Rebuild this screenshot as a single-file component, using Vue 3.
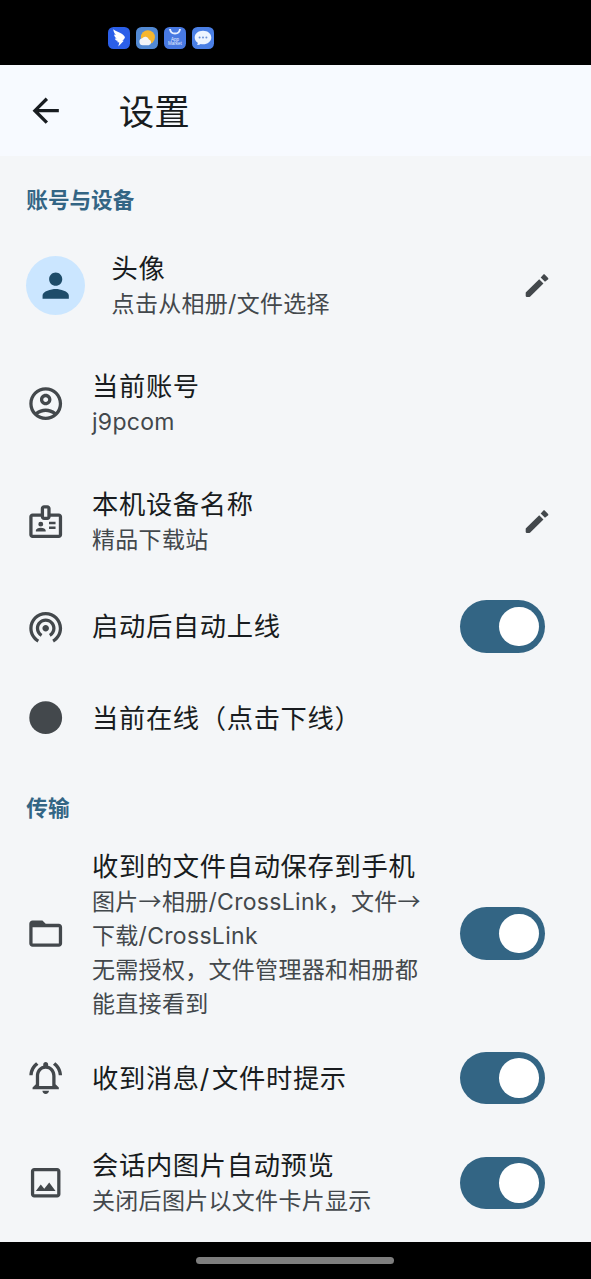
<script setup>
const icons = {
  account: 'M12 2C6.48 2 2 6.48 2 12s4.48 10 10 10 10-4.48 10-10S17.52 2 12 2zM7.35 18.5C8.66 17.56 10.26 17 12 17s3.34.56 4.65 1.5C15.34 19.44 13.74 20 12 20s-3.34-.56-4.65-1.5zm10.79-1.38C16.45 15.8 14.32 15 12 15s-4.45.8-6.14 2.12C4.7 15.73 4 13.95 4 12c0-4.42 3.58-8 8-8s8 3.58 8 8c0 1.95-.7 3.73-1.86 5.12zM12 6c-1.93 0-3.5 1.57-3.5 3.5S10.07 13 12 13s3.5-1.57 3.5-3.5S13.93 6 12 6zm0 5c-.83 0-1.5-.67-1.5-1.5S11.17 8 12 8s1.5.67 1.5 1.5S12.83 11 12 11z',
  badge: 'M20 7h-5V4c0-1.1-.9-2-2-2h-2c-1.1 0-2 .9-2 2v3H4c-1.1 0-2 .9-2 2v11c0 1.1.9 2 2 2h16c1.1 0 2-.9 2-2V9c0-1.1-.9-2-2-2zM11 4h2v5h-2V4zm9 16H4V9h5c0 1.1.9 2 2 2h2c1.1 0 2-.9 2-2h5v11zM9 12a1.5 1.5 0 1 0 0 3 1.5 1.5 0 0 0 0-3zm2.08 4.18C10.44 15.9 9.74 15.75 9 15.75s-1.44.15-2.08.43C6.36 16.42 6 16.96 6 17.57V18h6v-.43c0-.61-.36-1.15-.92-1.39zM14 12h4v1.5h-4zM14 15h4v1.5h-4z',
  tether: 'M12 11c-1.1 0-2 .9-2 2s.9 2 2 2 2-.9 2-2-.9-2-2-2zm6 2c0-3.31-2.69-6-6-6s-6 2.69-6 6c0 2.22 1.21 4.15 3 5.19l1-1.74c-1.19-.7-2-1.97-2-3.45 0-2.21 1.79-4 4-4s4 1.79 4 4c0 1.48-.81 2.75-2 3.45l1 1.74c1.79-1.04 3-2.97 3-5.19zM12 3C6.48 3 2 7.48 2 13c0 3.7 2.01 6.92 4.99 8.65l1-1.73C5.61 18.53 4 15.96 4 13c0-4.42 3.58-8 8-8s8 3.58 8 8c0 2.96-1.61 5.53-4 6.92l1 1.73c2.99-1.73 5-4.95 5-8.65 0-5.52-4.48-10-10-10z',
  dot: 'M12 2a10 10 0 1 0 0 20 10 10 0 0 0 0-20z',
  folder: 'M20 6h-8l-2-2H4c-1.1 0-1.99.9-1.99 2L2 18c0 1.1.9 2 2 2h16c1.1 0 2-.9 2-2V8c0-1.1-.9-2-2-2zm0 12H4V8h16v10z',
  bell: 'M12 22c1.1 0 2-.9 2-2h-4c0 1.1.9 2 2 2zm6-6v-5c0-3.07-1.63-5.64-4.5-6.32V4c0-.83-.67-1.5-1.5-1.5s-1.5.67-1.5 1.5v.68C7.64 5.36 6 7.92 6 11v5l-2 2v1h16v-1l-2-2zm-2 1H8v-6c0-2.48 1.51-4.5 4-4.5s4 2.02 4 4.5v6zM7.58 4.08L6.15 2.65C3.75 4.48 2.17 7.3 2.03 10.5h2c.15-2.65 1.51-4.97 3.55-6.42zm12.39 6.42h2c-.15-3.2-1.73-6.02-4.12-7.85l-1.42 1.43c2.02 1.45 3.39 3.77 3.54 6.42z',
  image: 'M19 5v14H5V5h14m0-2H5c-1.1 0-2 .9-2 2v14c0 1.1.9 2 2 2h14c1.1 0 2-.9 2-2V5c0-1.1-.9-2-2-2zm-4.86 8.86l-3 3.87L9 13.14 6 17h12l-3.86-5.14z',
  edit: 'M3 17.9v2.4c0 .4.3.7.7.7h2.400c.2 0 .4-.1.6-.3L17.400 10.050 13.950 6.600 3.200 17.300c-.1.200-.2.400-.2.600zM21 6.900c.5-.5.500-1 0-1.500l-2.400-2.400c-.4-.4-1-.4-1.400 0l-2.050 2.200 3.500 3.500z',
}

const sections = [
  {
    title: '账号与设备',
    rows: [
      { avatar: true, title: '头像', lines: ['点击从相册/文件选择'], action: 'edit' },
      { icon: 'account', title: '当前账号', lines: ['j9pcom'] },
      { icon: 'badge', title: '本机设备名称', lines: ['精品下载站'], action: 'edit' },
      { icon: 'tether', title: '启动后自动上线', action: 'switch' },
      { icon: 'dot', title: '当前在线（点击下线）' },
    ],
  },
  {
    title: '传输',
    rows: [
      {
        icon: 'folder',
        title: '收到的文件自动保存到手机',
        lines: ['图片→相册/CrossLink，文件→', '下载/CrossLink', '无需授权，文件管理器和相册都', '能直接看到'],
        action: 'switch',
        tall: true,
      },
      { icon: 'bell', title: '收到消息/文件时提示', action: 'switch' },
      { icon: 'image', title: '会话内图片自动预览', lines: ['关闭后图片以文件卡片显示'], action: 'switch' },
    ],
  },
]

// Splits a line into latin and non-latin runs so each gets its own font.
const runs = (s) => s.split(/([A-Za-z0-9/]+)/).filter(Boolean)
const isLatin = (s) => /^[A-Za-z0-9/]/.test(s)
</script>

<template>
  <div class="screen">
    <div class="status">
      <svg class="app" viewBox="0 0 22 22">
        <rect width="22" height="22" rx="5.5" fill="#2b5fe8" />
        <path d="M5.300 2.200c2.800 2.200 6 2.800 8.800 4.800 1.800 1.300 2.900 2.600 2.800 3.500-.2 1.200-1.500 2.200-2.600 3.300h1.500l-5.500 5.800 1-4.200-2.500-.5 1.500-.9c-2-.4-3-1.300-3.500-2.600l1.900.2C7.200 10.500 6.200 9 6 7.500l1.900.6C6.300 6.300 5.400 4.200 5.300 2.200z" fill="#fff" />
      </svg>
      <svg class="app" viewBox="0 0 22 22">
        <rect width="22" height="22" rx="5.500" fill="#5289d3" />
        <circle cx="11.900" cy="10.200" r="7" fill="#f5b62f" />
        <path d="M6.700 18.300a3.600 3.600 0 0 1-.5-7.100 3.800 3.800 0 0 1 6.700 1.300A3 3 0 0 1 12.700 18.300z" fill="#f3f5f8" />
      </svg>
      <svg class="app" viewBox="0 0 22 22">
        <rect width="22" height="22" rx="5.500" fill="#4879e2" />
        <path d="M6 2c.5 6 9.500 6 10 0" fill="none" stroke="#e6efff" stroke-width="1.900" />
        <text x="11" y="13.700" class="market">App</text>
        <text x="11" y="18" class="market">Market</text>
      </svg>
      <svg class="app" viewBox="0 0 22 22">
        <rect width="22" height="22" rx="5.500" fill="#4a7fe5" />
        <path d="M11 3.700c4.800 0 8.300 2.900 8.300 6.800s-3.500 6.800-8.300 6.800c-.8 0-1.600-.1-2.300-.3-.9.700-2.200 1.100-3.600 1 .5-.6.700-1.400.6-2.300C3.800 14.400 2.700 12.600 2.700 10.500c0-3.900 3.500-6.800 8.300-6.800z" fill="#edf4ff" />
        <circle cx="7.600" cy="10.500" r="1" fill="#6d93d8" />
        <circle cx="11" cy="10.500" r="1" fill="#6d93d8" />
        <circle cx="14.400" cy="10.500" r="1" fill="#6d93d8" />
      </svg>
    </div>

    <header class="bar">
      <svg class="icon back" viewBox="0 0 24 24">
        <path d="M20 11H7.830l5.590-5.590L12 4l-8 8 8 8 1.410-1.410L7.830 13H20v-2z" />
      </svg>
      <h1>设置</h1>
    </header>

    <main>
      <section v-for="s in sections" :key="s.title">
        <h2>{{ s.title }}</h2>
        <div v-for="r in s.rows" :key="r.title" class="row" :class="{ two: r.lines, tall: r.tall }">
          <span v-if="r.avatar" class="avatar">
            <svg class="icon" viewBox="0 0 24 24">
              <path d="M12 12c2.210 0 4-1.790 4-4s-1.790-4-4-4-4 1.790-4 4 1.790 4 4 4zm0 2c-2.670 0-8 1.340-8 4v2h16v-2c0-2.660-5.330-4-8-4z" />
            </svg>
          </span>
          <svg v-else class="icon" viewBox="0 0 24 24"><path :d="icons[r.icon]" /></svg>
          <div class="text">
            <div class="title">
              <span v-for="(p, i) in runs(r.title)" :key="i" :class="{ latin: isLatin(p) }">{{ p }}</span>
            </div>
            <div v-for="l in r.lines" :key="l" class="sub">
              <span v-for="(p, i) in runs(l)" :key="i" :class="{ latin: isLatin(p) }">{{ p }}</span>
            </div>
          </div>
          <svg v-if="r.action === 'edit'" class="edit" viewBox="0 0 24 24"><path :d="icons.edit" /></svg>
          <span v-else-if="r.action === 'switch'" class="switch"><i></i></span>
        </div>
      </section>
    </main>

    <footer><i></i></footer>
  </div>
</template>

<style>
body {
  background: #000;
}
</style>

<style scoped>
.screen {
  width: 591px;
  height: 1279px;
  display: flex;
  flex-direction: column;
  overflow: hidden;
  background: #f4f6f8;
  color: #181c20;
  font-family: "Noto Sans CJK SC", sans-serif;
}
.status {
  box-sizing: border-box;
  height: 65px;
  flex: none;
  display: flex;
  gap: 6px;
  padding: 27px 0 0 108px;
  background: #000;
}
.app {
  width: 22px;
  height: 22px;
}
.market {
  font: 4.500px "Liberation Sans", sans-serif;
  text-anchor: middle;
  fill: #e6efff;
}
.bar {
  height: 91px;
  flex: none;
  display: flex;
  align-items: center;
  padding-left: 26.300px;
  background: #f7faff;
}
.icon {
  width: 39.400px;
  height: 39.400px;
  flex: none;
  fill: #43484c;
}
.back {
  fill: #181c20;
}
h1 {
  margin: 0 0 2px 53px;
  font-size: 35.500px;
  line-height: 48px;
  font-weight: 400;
}
main {
  flex: 1;
  min-height: 0;
}
h2 {
  box-sizing: border-box;
  margin: 0;
  padding: 28px 0 0 26.300px;
  height: 70.700px;
  line-height: 30px;
  font-size: 21.600px;
  font-weight: 700;
  color: #336584;
}
.row {
  display: flex;
  align-items: center;
  height: 91.500px;
  padding-left: 26.300px;
}
.row.two {
  height: 118px;
}
.row.tall {
  height: 198px;
}
.avatar {
  width: 59px;
  height: 59px;
  flex: none;
  display: flex;
  align-items: center;
  justify-content: center;
  border-radius: 50%;
  background: #cbe6ff;
}
.avatar .icon {
  fill: #1e4c69;
}
.text {
  flex: 1;
  margin-left: 26.300px;
  padding-bottom: 2.500px;
  white-space: nowrap;
}
.two .text {
  padding-bottom: 4px;
}
.tall .text {
  padding-bottom: 1px;
}
.title {
  font-size: 26.300px;
  line-height: 38px;
  letter-spacing: 0.650px;
}
.title .latin {
  letter-spacing: 2.800px;
}
.sub {
  font-size: 23px;
  line-height: 33.800px;
  letter-spacing: 0.300px;
  color: #43484c;
}
.latin {
  font-family: Inter, sans-serif;
  line-height: 1;
}
.edit {
  width: 29.600px;
  height: 29.600px;
  margin-right: 39.400px;
  fill: #43484c;
}
.switch {
  box-sizing: border-box;
  width: 85.400px;
  height: 52.500px;
  margin-right: 46px;
  padding: 6.500px;
  display: flex;
  justify-content: flex-end;
  border-radius: 27px;
  background: #336584;
}
.switch i {
  width: 39.500px;
  height: 39.500px;
  border-radius: 50%;
  background: #fff;
}
footer {
  height: 37px;
  flex: none;
  display: flex;
  justify-content: center;
  background: #000;
}
footer i {
  width: 198px;
  height: 7px;
  margin: 15px 1px 0 0;
  border-radius: 4px;
  background: #7e7e7e;
}
</style>
